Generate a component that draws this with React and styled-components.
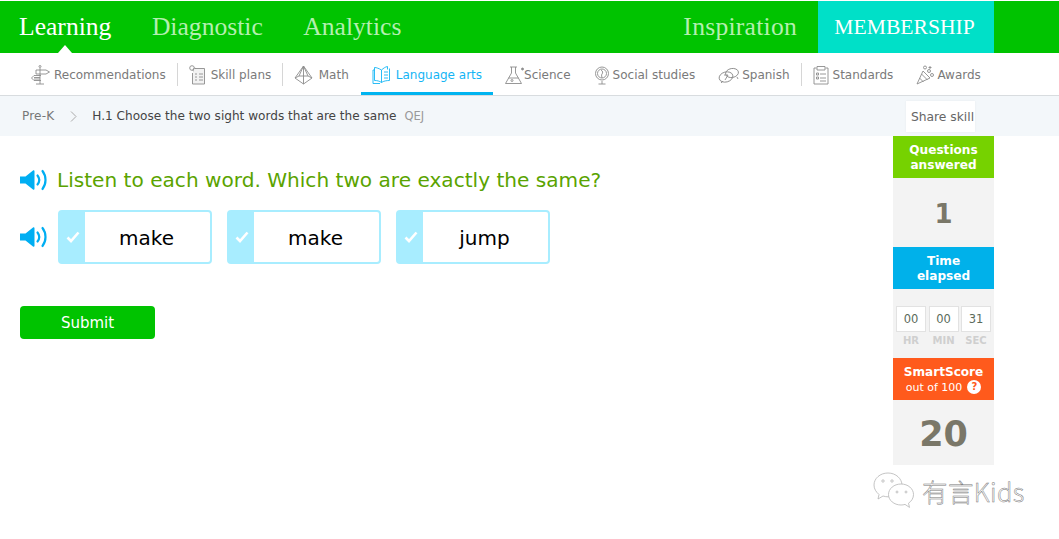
import React from "react";
import styled, { createGlobalStyle } from "styled-components";

const Global = createGlobalStyle`
  html, body { margin: 0; padding: 0; background: #fff; }
  body { font-family: "DejaVu Sans", Verdana, sans-serif; overflow: hidden; }
  #root { width: 1059px; height: 539px; position: relative; overflow: hidden; }
`;

const TopBar = styled.header`
  margin-top: 1px; height: 52px; background: #00c300; display: flex; align-items: stretch;
  justify-content: space-between; padding: 0 65px 0 19px;
`;
const NavGroup = styled.nav`display: flex; align-items: stretch; gap: ${p => p.$gap}px;`;
const NavLink = styled.a`
  position: relative; display: flex; align-items: center; padding-bottom: 1px;
  font-family: "Liberation Serif", serif; font-size: 25.6px; white-space: nowrap;
  letter-spacing: ${p => p.$track ?? 0}px;
  color: ${p => (p.$active ? "#fff" : "#b4efb0")};
  ${p => p.$active && `&::after { content: ""; position: absolute; left: 50%; bottom: 0; margin-left: -7px;
    border-left: 7px solid transparent; border-right: 7px solid transparent; border-bottom: 8px solid #fff; }`}
`;
const Member = styled.a`
  display: flex; align-items: center; justify-content: center; width: 176px; padding-right: 3px; box-sizing: border-box;
  background: #00e0c8; color: #fff; font-family: "Liberation Serif", serif; font-size: 21.6px; white-space: nowrap;
`;

const Tabs = styled.div`
  height: 42px; display: flex; gap: 1px; padding-left: 20px; border-bottom: 1px solid #d8dcdf; background: #fff;
`;
const Tab = styled.a`
  position: relative; display: flex; align-items: center; gap: ${p => p.$gap ?? 4}px; padding: 1px 11px 0;
  font-size: 12px; white-space: nowrap; color: ${p => (p.$active ? "#13b5f5" : "#7a7a7a")};
  ${p => p.$active && `box-shadow: inset 0 -3px 0 #00b4f0;`}
  ${p => p.$sep && `&::after { content: ""; position: absolute; right: -1px; top: 10px; height: 23px; width: 1px; background: #d6d6d6; }`}
`;
const TabIcon = styled.svg`
  width: ${p => p.$w}px; height: 20px; flex: none; fill: none; stroke: currentColor; stroke-width: 0.9;
  color: ${p => (p.$active ? "#13b5f5" : "#8c8c8c")};
`;

const Crumbs = styled.div`
  height: 40px; background: #f3f7fa; display: flex; align-items: center; padding: 0 84px 0 22px;
  font-size: 12.1px; color: #555;
`;
const Crumb = styled.span`color: #777; margin-right: 16px; letter-spacing: 0.15px;`;
const Chevron = styled.svg`width: 7px; height: 11px; fill: none; stroke: #aaa; stroke-width: 1; margin-right: 15px;`;
const SkillName = styled.span`color: #444; white-space: nowrap;`;
const Code = styled.span`color: #999; font-size: 11.5px; margin-left: 8px;`;
const Share = styled.button`
  margin-left: auto; width: 69px; height: 31px; padding: 0 0 0 4px; border: 0; background: #fff; color: #666;
  font: 12.3px "DejaVu Sans", sans-serif; white-space: nowrap; box-shadow: 0 0 2px rgba(0,0,0,.06); margin-top: 1px;
`;

const Main = styled.main`display: flex; justify-content: space-between; padding: 0 65px 0 20px;`;
const Practice = styled.section`padding-top: 30px;`;
const Question = styled.div`
  display: flex; align-items: center; gap: 9px; height: 28px; color: #5aa300; font-size: 20.1px; white-space: nowrap;
`;
const Speaker = styled.svg`width: 28px; height: 22px; flex: none;`;
const ChoiceRow = styled.div`display: flex; align-items: center; margin-top: 16px;`;
const Choices = styled.div`display: flex; gap: 15px; margin-left: 10px;`;
const Choice = styled.div`
  width: 154px; height: 54px; box-sizing: border-box; border: 2px solid #a8edff; border-radius: 4px; display: flex; background: #fff;
`;
const CheckStrip = styled.span`
  width: 25px; flex: none; background: #a8edff; display: flex; align-items: center; justify-content: center;
`;
const Word = styled.span`flex: 1; text-align: center; font-size: 20px; line-height: 52px; height: 50px; padding-right: 2px; color: #000;`;
const Submit = styled.button`
  display: block; margin-top: 42px; width: 135px; height: 33px; border: 0; border-radius: 4px; background: #00c300;
  color: #fff; font: 15px "DejaVu Sans", sans-serif; padding: 0;
`;

const Side = styled.aside`width: 101px; background: #f3f3f3; display: flex; flex-direction: column; height: 329px;`;
const SideHead = styled.div`
  height: 42px; padding-top: 1px; box-sizing: border-box; background: ${p => p.$bg}; color: #fff; font-size: 12.1px; font-weight: 700; line-height: 15px;
  text-align: center; display: flex; flex-direction: column; justify-content: center;
`;
const SideSub = styled.div`
  font-weight: 400; font-size: 11px; display: flex; align-items: center; justify-content: center; gap: 5px;
`;
const Help = styled.span`
  width: 14px; height: 14px; border-radius: 50%; background: #fff; color: #ff5a1c; font-size: 10px; font-weight: 700;
  line-height: 14px; text-align: center;
`;
const Stat = styled.div`
  height: ${p => p.$h}px; padding-top: 2px; box-sizing: border-box; display: flex; align-items: center; justify-content: center; color: #7a7768;
  font-size: ${p => p.$size}px; font-weight: 700;
`;
const Timer = styled.div`height: 69px; display: flex; gap: 2.5px; padding: 17px 0 0 3px; box-sizing: border-box;`;
const TimeCol = styled.div`display: flex; flex-direction: column; align-items: center; width: 30px;`;
const TimeBox = styled.div`
  width: 100%; height: 26px; box-sizing: border-box; background: #fff; border: 1px solid #e2e2e2; color: #5b6b5b;
  font-size: 11.5px; line-height: 24px; text-align: center;
`;
const TimeLabel = styled.div`font-size: 10px; font-weight: 700; color: #cfcfcf; margin-top: 2px; line-height: 13px;`;

const Watermark = styled.div`
  position: absolute; left: 873px; top: 472px; display: flex; align-items: center; gap: 7px; color: #fff;
`;
const WmText = styled.span`
  font-family: "Noto Sans CJK SC", "Noto Sans", sans-serif; font-size: 25.5px; font-weight: 300; color: #fff;
  -webkit-text-stroke: 0.5px #777; white-space: nowrap; letter-spacing: 0.4px; margin-top: -1px;
`;

const SpeakerIcon = () => (
  <Speaker viewBox="0 0 28 22">
    <path d="M0 7.500h5.500L13 1.500c.8-.6 1.500-.2 1.500.8v17.400c0 1-.7 1.400-1.500.8L5.500 14.500H0z" fill="#00aef2" />
    <path d="M17.500 6.500c2.200 2.800 2.200 6.200 0 9" fill="none" stroke="#00aef2" strokeWidth="2.200" strokeLinecap="round" />
    <path d="M22.500 2c4 5.200 4 12.800 0 18" fill="none" stroke="#00aef2" strokeWidth="2.200" strokeLinecap="round" />
  </Speaker>
);

const Check = () => (
  <svg width="14" height="12" viewBox="0 0 14 12">
    <path d="M1.500 6.500 5 10l7.500-8.500" fill="none" stroke="#fff" strokeWidth="2.600" />
  </svg>
);

const icons = {
  rec: <><circle cx="9" cy="1.500" r="1" /><path d="M5 19h8M9 19V3M5 5h10l3.500 2L15 9H5zM10 10.500H3L.5 13 3 15.500h7" /><path d="M3 12.500h6M3 14h6" /></>,
  plan: <><circle cx="3" cy="3" r="2.300" /><circle cx="5.800" cy="5" r="1.800" /><path d="M6 3.500h9.500V19H3.500V8" fill="#f2f2f2" /><path d="M6 9h2M10 9h4M6 12h2M10 12h4M6 15h2M10 15h4" /></>,
  math: <><path d="M9.500 1 1 13l8.500 6 8.500-6zM9.500 1v18M9.500 1 5 11l-4 2M9.500 1 14 11l4 2M5 11h9" /></>,
  book: <><path d="M9.500 5C7 3.500 4.500 2.500 2.500 2.500V15.500c2.500 0 5 .5 7 2zM9.500 5c2-1.700 3.500-3 6-3.500v3M9.500 17.500c2-1.500 5-2 8-2V3.500M2.500 5H1v13.500h7M12 7h4M12 10h4M12 13h4" /></>,
  sci: <><path d="M5 2h7M6.500 2v6L.5 18.500h16L10.500 8V2M3.500 13h10" /><circle cx="7" cy="15.500" r="1" /><circle cx="17.500" cy="4" r="1" fill="#8c8c8c" /></>,
  social: <><circle cx="8" cy="8.500" r="6.500" /><circle cx="8" cy="8.500" r="4.500" /><path d="M7 5c2 1 2 3 1 4s0 3 0 4M8 16v3M4.500 19h7" /></>,
  spanish: <><ellipse cx="8" cy="12" rx="7" ry="5" transform="rotate(-15 8 12)" /><ellipse cx="14" cy="8" rx="6.500" ry="4.500" transform="rotate(-10 14 8)" /><path d="M6 10h4l-3 5M3 18l2-2M19 12l1 2" /></>,
  std: <><path d="M3.500 3H1v16h14V3h-2.500M4 1.500h8V5H4zM3.500 8h2v2h-2zM3.500 12h2v2h-2zM7 9h6M7 13h6M7 16h6" /></>,
  award: <><path d="M1 19 7 6l7 7zM3.500 13l4 4M5.500 9l6 6" /><circle cx="9" cy="2.500" r="1.500" /><circle cx="13" cy="6" r="1.500" /><circle cx="16" cy="10" r="1.500" /><path d="M14 1v3M12.500 2.500h3" /></>,
};

const tabs = [
  ["rec", 19, "Recommendations", true, 4],
  ["plan", 16, "Skill plans", true, 6],
  ["math", 19, "Math", false, 5.5],
  ["book", 19, "Language arts", false, 5, true],
  ["sci", 19, "Science", false, 0],
  ["social", 16, "Social studies", false, 3],
  ["spanish", 21, "Spanish", true, 3],
  ["std", 16, "Standards", false, 4],
  ["award", 18, "Awards", false, 3],
];

const words = ["make", "make", "jump"];

export default function App() {
  return (
    <>
      <Global />
      <TopBar>
        <NavGroup $gap={40.5}>
          <NavLink $active>Learning</NavLink>
          <NavLink>Diagnostic</NavLink>
          <NavLink>Analytics</NavLink>
        </NavGroup>
        <NavGroup $gap={21}>
          <NavLink $track={0.25}>Inspiration</NavLink>
          <Member>MEMBERSHIP</Member>
        </NavGroup>
      </TopBar>
      <Tabs>
        {tabs.map(([k, w, label, sep, gap, active]) => (
          <Tab key={label} $sep={sep} $gap={gap} $active={active}>
            <TabIcon $w={w} $active={active} viewBox={`0 0 ${w} 20`}>{icons[k]}</TabIcon>
            {label}
          </Tab>
        ))}
      </Tabs>
      <Crumbs>
        <Crumb>Pre-K</Crumb>
        <Chevron viewBox="0 0 7 11"><path d="M1 .5 6 5.500 1 10.500" /></Chevron>
        <SkillName>H.1 Choose the two sight words that are the same</SkillName>
        <Code>QEJ</Code>
        <Share>Share skill</Share>
      </Crumbs>
      <Main>
        <Practice>
          <Question><SpeakerIcon />Listen to each word. Which two are exactly the same?</Question>
          <ChoiceRow>
            <SpeakerIcon />
            <Choices>
              {words.map((w, i) => (
                <Choice key={i}><CheckStrip><Check /></CheckStrip><Word>{w}</Word></Choice>
              ))}
            </Choices>
          </ChoiceRow>
          <Submit>Submit</Submit>
        </Practice>
        <Side>
          <SideHead $bg="#76d200">Questions<br />answered</SideHead>
          <Stat $h={69} $size={26}>1</Stat>
          <SideHead $bg="#00b1ea">Time<br />elapsed</SideHead>
          <Timer>
            {[["00", "HR"], ["00", "MIN"], ["31", "SEC"]].map(([v, l]) => (
              <TimeCol key={l}><TimeBox>{v}</TimeBox><TimeLabel>{l}</TimeLabel></TimeCol>
            ))}
          </Timer>
          <SideHead $bg="#ff5a1c">SmartScore<SideSub>out of 100 <Help>?</Help></SideSub></SideHead>
          <Stat $h={65} $size={35}>20</Stat>
        </Side>
      </Main>
      <Watermark>
        <svg width="42" height="38" viewBox="0 0 42 38" fill="#fff" stroke="#b5b5b5" strokeWidth="0.8">
          <path d="M15 1C7 1 1 6.500 1 13c0 4 2.200 7 5 9.500L5 27l5-3c2 .6 3.500.8 5 .8 8 0 14-5 14-11.500S23 1 15 1z" />
          <path d="M28 12c-7 0-12.500 4.700-12.500 10.500S21 33 28 33c1.500 0 2.800-.2 4-.6l4.500 3-1-4.200c3-2 5-5 5-8.700C40.500 16.700 35 12 28 12z" />
          <circle cx="10" cy="9" r="1.200" /><circle cx="19" cy="9" r="1.200" /><circle cx="24" cy="20" r="1" /><circle cx="33" cy="20" r="1" />
        </svg>
        <WmText>有言Kids</WmText>
      </Watermark>
    </>
  );
}
